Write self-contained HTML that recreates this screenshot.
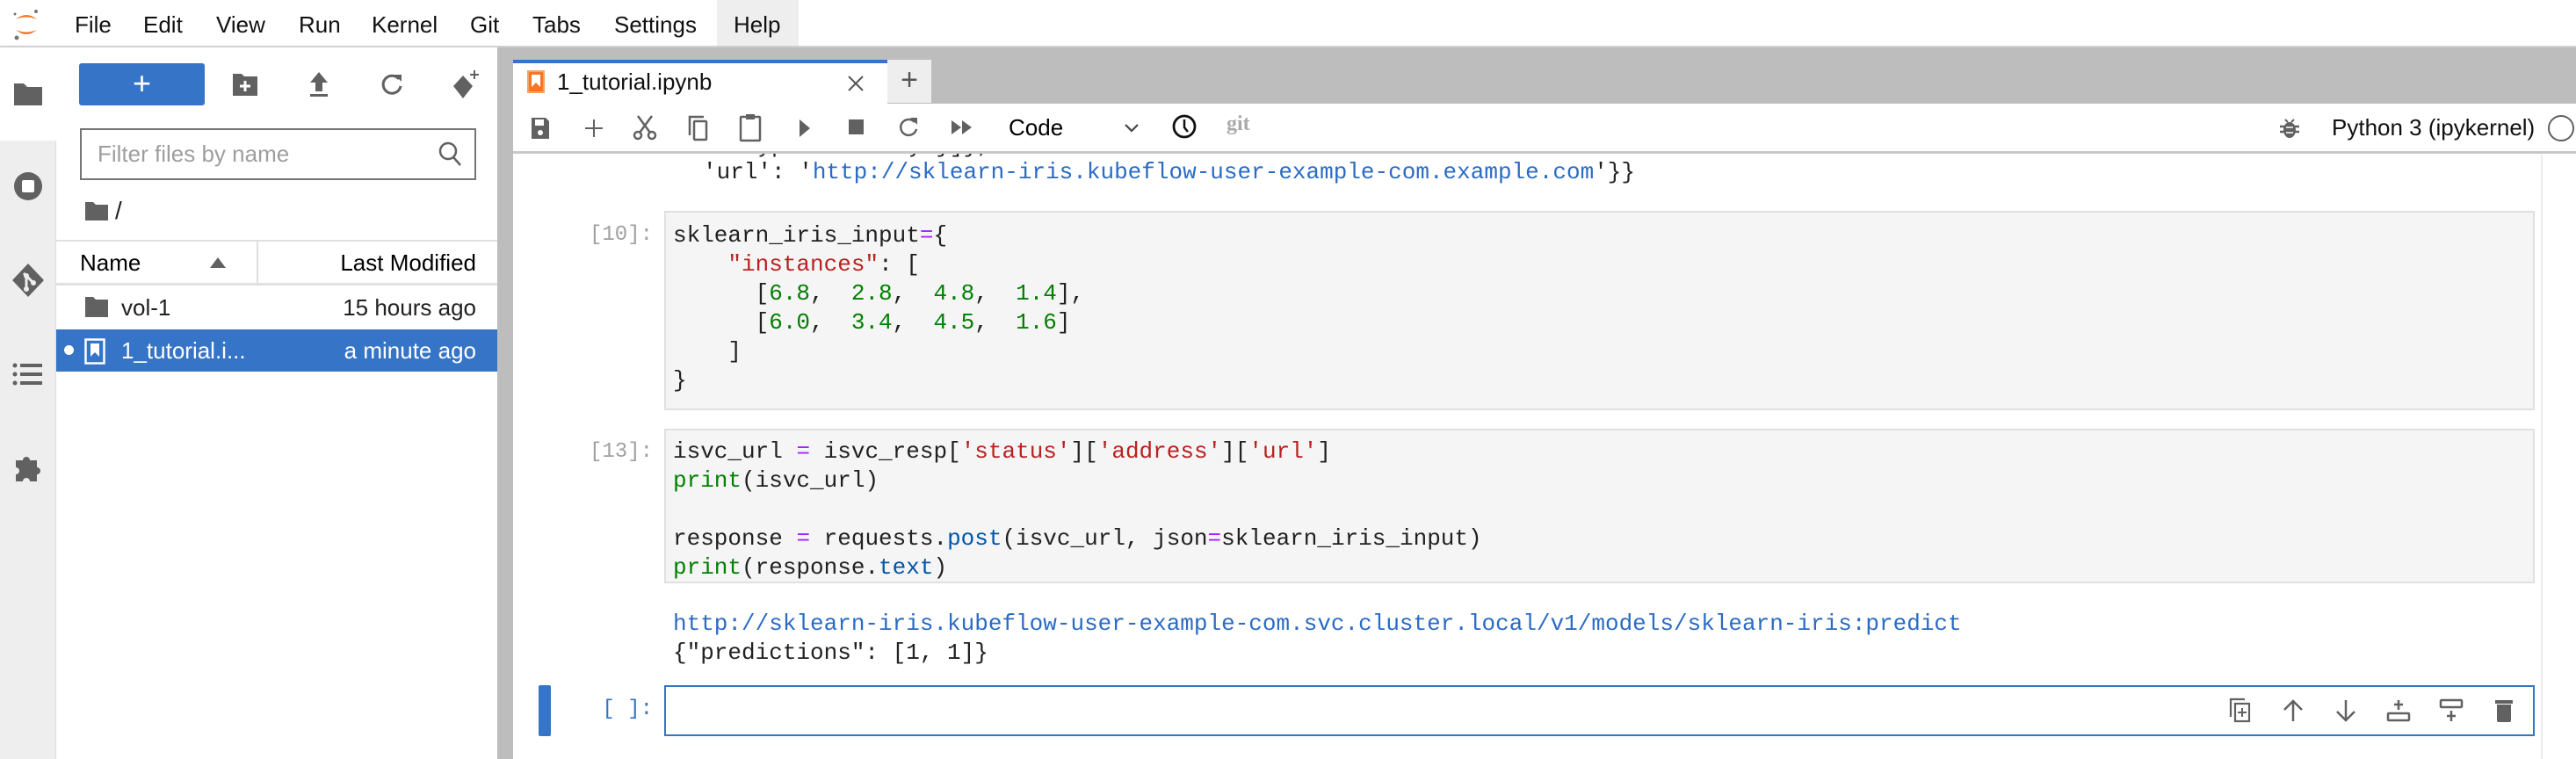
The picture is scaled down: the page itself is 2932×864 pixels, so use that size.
<!DOCTYPE html>
<html><head><meta charset="utf-8"><style>
*{box-sizing:border-box;margin:0;padding:0}
body{width:2932px;height:864px;overflow:hidden;background:#fff;font-family:"Liberation Sans",sans-serif;color:#212121;position:relative}
.a{position:absolute}
.menu{left:0;top:0;width:2932px;height:54px;border-bottom:2px solid #d0d0d0;background:#fff}
.mi{position:absolute;top:13px;font-size:26px;color:#111}
.mono{font-family:"Liberation Mono",monospace;font-size:26px;white-space:pre;line-height:33px}
.s{color:#ba2121}.n{color:#008000}.o{color:#aa22ff}.b{color:#008000}.p{color:#0055aa}.u{color:#2a6bc4}
.prompt{font-family:"Liberation Mono",monospace;font-size:24px;color:#a0a0a0;text-align:right;width:200px}
.cell{background:#f5f5f5;border:2px solid #e0e0e0}
svg{position:absolute}
</style></head><body>
<!-- partial line under toolbar -->
<div class="a mono" style="left:800px;top:151px;line-height:30px">  'type': 'Ready'}]},</div>
<!-- menu -->
<div class="a menu">
<svg style="left:12px;top:8px" width="36" height="40" viewBox="0 0 36 40"><path d="M6 14 Q18 4 30 14 Q18 9 6 14Z" fill="#f37726"/><path d="M6 26 Q18 36 30 26 Q18 31 6 26Z" fill="#f37726"/><circle cx="29" cy="5" r="2" fill="#767677"/><circle cx="7" cy="35" r="2.5" fill="#767677"/><circle cx="5" cy="8" r="1.5" fill="#767677"/></svg>
<div class="a" style="left:816px;top:0;width:93px;height:52px;background:#eeeeee"></div>
<span class="mi" style="left:85px">File</span><span class="mi" style="left:163px">Edit</span><span class="mi" style="left:246px">View</span><span class="mi" style="left:340px">Run</span><span class="mi" style="left:423px">Kernel</span><span class="mi" style="left:535px">Git</span><span class="mi" style="left:606px">Tabs</span><span class="mi" style="left:699px">Settings</span><span class="mi" style="left:835px">Help</span>
</div>
<!-- rail -->
<div class="a" style="left:0;top:54px;width:64px;height:810px;background:#eeeeee;border-right:1px solid #ddd"></div>
<div class="a" style="left:0;top:54px;width:64px;height:106px;background:#fff"></div>
<svg style="left:14px;top:92px" width="36" height="30" viewBox="0 0 36 30"><path d="M2 3h11l4 4h17v21H2z" fill="#616161"/></svg>
<svg style="left:14px;top:194px" width="36" height="36" viewBox="0 0 36 36"><circle cx="18" cy="18" r="16" fill="#616161"/><rect x="11" y="11" width="14" height="14" rx="2" fill="#fff"/></svg>
<svg style="left:12px;top:298px" width="40" height="42" viewBox="0 0 40 42"><path d="M20 2L38 21 20 40 2 21Z" fill="#616161"/><path d="M15 13l10 10M18 16v14" stroke="#eee" stroke-width="3"/><circle cx="18" cy="16" r="3" fill="#eee"/><circle cx="26" cy="24" r="3" fill="#eee"/><circle cx="18" cy="31" r="3" fill="#eee"/></svg>
<svg style="left:14px;top:412px" width="36" height="28" viewBox="0 0 36 28"><g fill="#616161"><circle cx="3" cy="4" r="2.5"/><circle cx="3" cy="14" r="2.5"/><circle cx="3" cy="24" r="2.5"/><rect x="9" y="2" width="25" height="4"/><rect x="9" y="12" width="25" height="4"/><rect x="9" y="22" width="25" height="4"/></g></svg>
<svg style="left:14px;top:514px" width="36" height="36" viewBox="0 0 36 36"><path d="M4 10h8a4 4 0 1 1 8 0h8v8a4 4 0 1 1 0 8v8h-8a4 4 0 1 0-8 0H4v-8a4 4 0 1 0 0-8z" fill="#616161"/></svg>
<!-- file browser -->
<div class="a" style="left:90px;top:72px;width:143px;height:48px;background:#3574c6;border-radius:3px;color:#fff;font-size:36px;text-align:center;line-height:46px">+</div>
<svg style="left:264px;top:82px" width="30" height="28" viewBox="0 0 30 28"><path d="M1 2h10l3 3h15v22H1z" fill="#616161"/><path d="M15 10v12M9 16h12" stroke="#fff" stroke-width="3"/></svg>
<svg style="left:350px;top:80px" width="26" height="32" viewBox="0 0 26 32"><path d="M13 2L3 14h6v10h8V14h6z" fill="#616161"/><rect x="3" y="27" width="20" height="3" fill="#616161"/></svg>
<svg style="left:432px;top:82px" width="28" height="28" viewBox="0 0 28 28"><path d="M22 8A10 10 0 1 0 24 16" fill="none" stroke="#616161" stroke-width="3"/><path d="M17 3h8v8z" fill="#616161"/></svg>
<svg style="left:514px;top:78px" width="34" height="36" viewBox="0 0 34 36"><path d="M13 8L24 20 13 34 2 20Z" fill="#616161"/><path d="M26 2v10M21 7h10" stroke="#616161" stroke-width="2"/></svg>
<div class="a" style="left:91px;top:146px;width:451px;height:59px;border:2px solid #757575;background:#fff"></div>
<div class="a" style="left:111px;top:160px;font-size:26px;color:#9e9e9e">Filter files by name</div>
<svg style="left:498px;top:160px" width="30" height="32" viewBox="0 0 30 32"><circle cx="12" cy="12" r="9" fill="none" stroke="#616161" stroke-width="2.5"/><path d="M18 19l8 9" stroke="#616161" stroke-width="2.5"/></svg>
<svg style="left:96px;top:228px" width="28" height="24" viewBox="0 0 28 24"><path d="M1 2h9l3 3h14v18H1z" fill="#616161"/></svg>
<div class="a" style="left:131px;top:224px;font-size:28px">/</div>
<div class="a" style="left:64px;top:273px;width:502px;height:52px;border-top:2px solid #e0e0e0;border-bottom:3px solid #e0e0e0"></div>
<div class="a" style="left:292px;top:275px;width:2px;height:48px;background:#e0e0e0"></div>
<div class="a" style="left:91px;top:284px;font-size:26px;color:#000">Name</div>
<svg style="left:238px;top:292px" width="20" height="14" viewBox="0 0 20 14"><path d="M10 1L19 13H1z" fill="#616161"/></svg>
<div class="a" style="left:300px;top:284px;width:242px;text-align:right;font-size:26px;color:#000">Last Modified</div>
<svg style="left:96px;top:336px" width="28" height="26" viewBox="0 0 28 26"><path d="M1 2h9l3 3h14v20H1z" fill="#616161"/></svg>
<div class="a" style="left:138px;top:335px;font-size:26px">vol-1</div>
<div class="a" style="left:300px;top:335px;width:242px;text-align:right;font-size:26px">15 hours ago</div>
<div class="a" style="left:64px;top:375px;width:502px;height:48px;background:#3574c6"></div>
<div class="a" style="left:73px;top:393px;width:11px;height:11px;border-radius:50%;background:#fff"></div>
<svg style="left:96px;top:385px" width="24" height="30" viewBox="0 0 24 30"><rect x="1.5" y="1.5" width="21" height="27" fill="none" stroke="#fff" stroke-width="2.5"/><path d="M7 6h10v15l-5-5-5 5z" fill="#fff"/></svg>
<div class="a" style="left:138px;top:384px;font-size:26px;color:#fff">1_tutorial.i...</div>
<div class="a" style="left:300px;top:384px;width:242px;text-align:right;font-size:26px;color:#fff">a minute ago</div>
<!-- splitter / tab bar -->
<div class="a" style="left:566px;top:54px;width:2366px;height:64px;background:#bdbdbd"></div>
<div class="a" style="left:566px;top:54px;width:18px;height:810px;background:#bdbdbd"></div>
<div class="a" style="left:584px;top:68px;width:426px;height:52px;background:#fff;border-top:4px solid #3574c6"></div>
<svg style="left:600px;top:80px" width="20" height="26" viewBox="0 0 20 26"><rect x="1" y="1" width="18" height="24" fill="#f37726" stroke="#f8a366" stroke-width="2"/><path d="M5 5h10v14l-5-5-5 5z" fill="#fff"/></svg>
<div class="a" style="left:634px;top:78px;font-size:26px;color:#111">1_tutorial.ipynb</div>
<svg style="left:963px;top:84px" width="22" height="22" viewBox="0 0 22 22"><path d="M3 3l16 16M19 3L3 19" stroke="#555" stroke-width="2"/></svg>
<div class="a" style="left:1010px;top:68px;width:50px;height:49px;background:#eeeeee;font-size:34px;color:#555;text-align:center;line-height:46px">+</div>
<!-- toolbar -->
<div class="a" style="left:584px;top:118px;width:2348px;height:57px;background:#fff;border-bottom:3px solid #c8c8c8"></div>
<svg style="left:603px;top:132px" width="24" height="28" viewBox="0 0 24 28"><path d="M2 2h16l4 4v20H2z" fill="#616161"/><rect x="6" y="4" width="10" height="7" fill="#fff"/><circle cx="12" cy="19" r="3" fill="#fff"/></svg>
<svg style="left:664px;top:134px" width="24" height="24" viewBox="0 0 24 24"><path d="M12 2v20M2 12h20" stroke="#616161" stroke-width="2"/></svg>
<svg style="left:720px;top:130px" width="28" height="30" viewBox="0 0 28 30"><circle cx="6" cy="24" r="4" fill="none" stroke="#616161" stroke-width="2.5"/><circle cx="22" cy="24" r="4" fill="none" stroke="#616161" stroke-width="2.5"/><path d="M8 21L22 2M20 21L6 2" stroke="#616161" stroke-width="2.5"/></svg>
<svg style="left:782px;top:130px" width="26" height="32" viewBox="0 0 26 32"><path d="M3 24V3h16" fill="none" stroke="#616161" stroke-width="2.5"/><rect x="8" y="8" width="14" height="21" rx="1" fill="none" stroke="#616161" stroke-width="2.5"/></svg>
<svg style="left:841px;top:128px" width="26" height="34" viewBox="0 0 26 34"><rect x="2" y="5" width="22" height="27" rx="1" fill="none" stroke="#616161" stroke-width="2.5"/><rect x="8" y="2" width="10" height="6" fill="#616161"/></svg>
<svg style="left:908px;top:134px" width="16" height="24" viewBox="0 0 16 24"><path d="M2 2l12 10-12 10z" fill="#616161"/></svg>
<svg style="left:965px;top:135px" width="20" height="20" viewBox="0 0 20 20"><rect x="1" y="1" width="17" height="17" fill="#616161"/></svg>
<svg style="left:1021px;top:132px" width="26" height="26" viewBox="0 0 26 26"><path d="M20 7A9 9 0 1 0 22 15" fill="none" stroke="#616161" stroke-width="2.5"/><path d="M15 2h8v8z" fill="#616161"/></svg>
<svg style="left:1082px;top:136px" width="26" height="18" viewBox="0 0 26 18"><path d="M1 1l11 8-11 8zM13 1l11 8-11 8z" fill="#616161"/></svg>
<div class="a" style="left:1148px;top:130px;font-size:26px;color:#000">Code</div>
<svg style="left:1279px;top:140px" width="18" height="12" viewBox="0 0 18 12"><path d="M2 2l7 7 7-7" fill="none" stroke="#444" stroke-width="2.2"/></svg>
<svg style="left:1333px;top:128px" width="30" height="32" viewBox="0 0 30 32"><circle cx="15" cy="16" r="12" fill="none" stroke="#111" stroke-width="2.8"/><path d="M15 8v9l4 5" fill="none" stroke="#111" stroke-width="2.5"/></svg>
<div class="a" style="left:1396px;top:128px;font-size:24px;color:#aaa;font-family:'Liberation Serif',serif;font-weight:bold">git</div>
<svg style="left:2594px;top:132px" width="24" height="26" viewBox="0 0 24 26"><path d="M7 4l3 3M17 4l-3 3" stroke="#616161" stroke-width="2"/><ellipse cx="12" cy="16" rx="7" ry="9" fill="#616161"/><path d="M1 12h22M1 18h22" stroke="#616161" stroke-width="2.5"/><path d="M8 13h8M8 19h8" stroke="#fff" stroke-width="1.5"/></svg>
<div class="a" style="left:2654px;top:130px;font-size:26px;color:#111">Python 3 (ipykernel)</div>
<div class="a" style="left:2900px;top:131px;width:30px;height:30px;border-radius:50%;border:2.5px solid #616161"></div>
<!-- notebook -->
<div class="a" style="left:2892px;top:176px;width:2px;height:688px;background:#ebebeb"></div>
<div class="a mono" style="left:800px;top:181px;line-height:30px">'url': '<span class="u">http://sklearn-iris.kubeflow-user-example-com.example.com</span>'}}</div>
<div class="a prompt" style="left:543px;top:254px">[10]:</div>
<div class="a cell" style="left:756px;top:240px;width:2129px;height:227px"></div>
<div class="a mono" style="left:766px;top:252px">sklearn_iris_input<span class="o">=</span>{
    <span class="s">"instances"</span>: [
      [<span class="n">6.8</span>,  <span class="n">2.8</span>,  <span class="n">4.8</span>,  <span class="n">1.4</span>],
      [<span class="n">6.0</span>,  <span class="n">3.4</span>,  <span class="n">4.5</span>,  <span class="n">1.6</span>]
    ]
}</div>
<div class="a prompt" style="left:543px;top:501px">[13]:</div>
<div class="a cell" style="left:756px;top:488px;width:2129px;height:176px"></div>
<div class="a mono" style="left:766px;top:498px">isvc_url <span class="o">=</span> isvc_resp[<span class="s">'status'</span>][<span class="s">'address'</span>][<span class="s">'url'</span>]
<span class="b">print</span>(isvc_url)

response <span class="o">=</span> requests.<span class="p">post</span>(isvc_url, json<span class="o">=</span>sklearn_iris_input)
<span class="b">print</span>(response.<span class="p">text</span>)</div>
<div class="a mono" style="left:766px;top:694px"><span class="u">http://sklearn-iris.kubeflow-user-example-com.svc.cluster.local/v1/models/sklearn-iris:predict</span>
{"predictions": [1, 1]}</div>
<div class="a" style="left:613px;top:780px;width:14px;height:58px;background:#3574c6;border-radius:2px"></div>
<div class="a prompt" style="left:543px;top:794px;color:#3574c6">[ ]:</div>
<div class="a" style="left:756px;top:780px;width:2129px;height:58px;border:2px solid #3574c6;background:#fff"></div>
<svg style="left:2537px;top:794px" width="26" height="30" viewBox="0 0 26 30"><path d="M2 22V2h16" fill="none" stroke="#616161" stroke-width="2.2"/><rect x="7" y="7" width="16" height="20" fill="none" stroke="#616161" stroke-width="2.2"/><path d="M15 12v10M10 17h10" stroke="#616161" stroke-width="2"/></svg>
<svg style="left:2597px;top:795px" width="26" height="28" viewBox="0 0 26 28"><path d="M13 26V3M3 13L13 3l10 10" fill="none" stroke="#616161" stroke-width="2.5"/></svg>
<svg style="left:2657px;top:795px" width="26" height="28" viewBox="0 0 26 28"><path d="M13 2v23M3 15l10 10 10-10" fill="none" stroke="#616161" stroke-width="2.5"/></svg>
<svg style="left:2716px;top:795px" width="28" height="28" viewBox="0 0 28 28"><rect x="2" y="17" width="24" height="8" rx="1" fill="none" stroke="#616161" stroke-width="2.5"/><path d="M14 2v11M9 7h10" stroke="#616161" stroke-width="2.5"/></svg>
<svg style="left:2776px;top:795px" width="28" height="28" viewBox="0 0 28 28"><rect x="2" y="2" width="24" height="8" rx="1" fill="none" stroke="#616161" stroke-width="2.5"/><path d="M14 14v12M9 20h10" stroke="#616161" stroke-width="2.5"/></svg>
<svg style="left:2838px;top:795px" width="24" height="28" viewBox="0 0 24 28"><rect x="2" y="2" width="20" height="4" fill="#616161"/><path d="M4 7h16v18a2 2 0 0 1-2 2H6a2 2 0 0 1-2-2z" fill="#616161"/></svg>
</body></html>
